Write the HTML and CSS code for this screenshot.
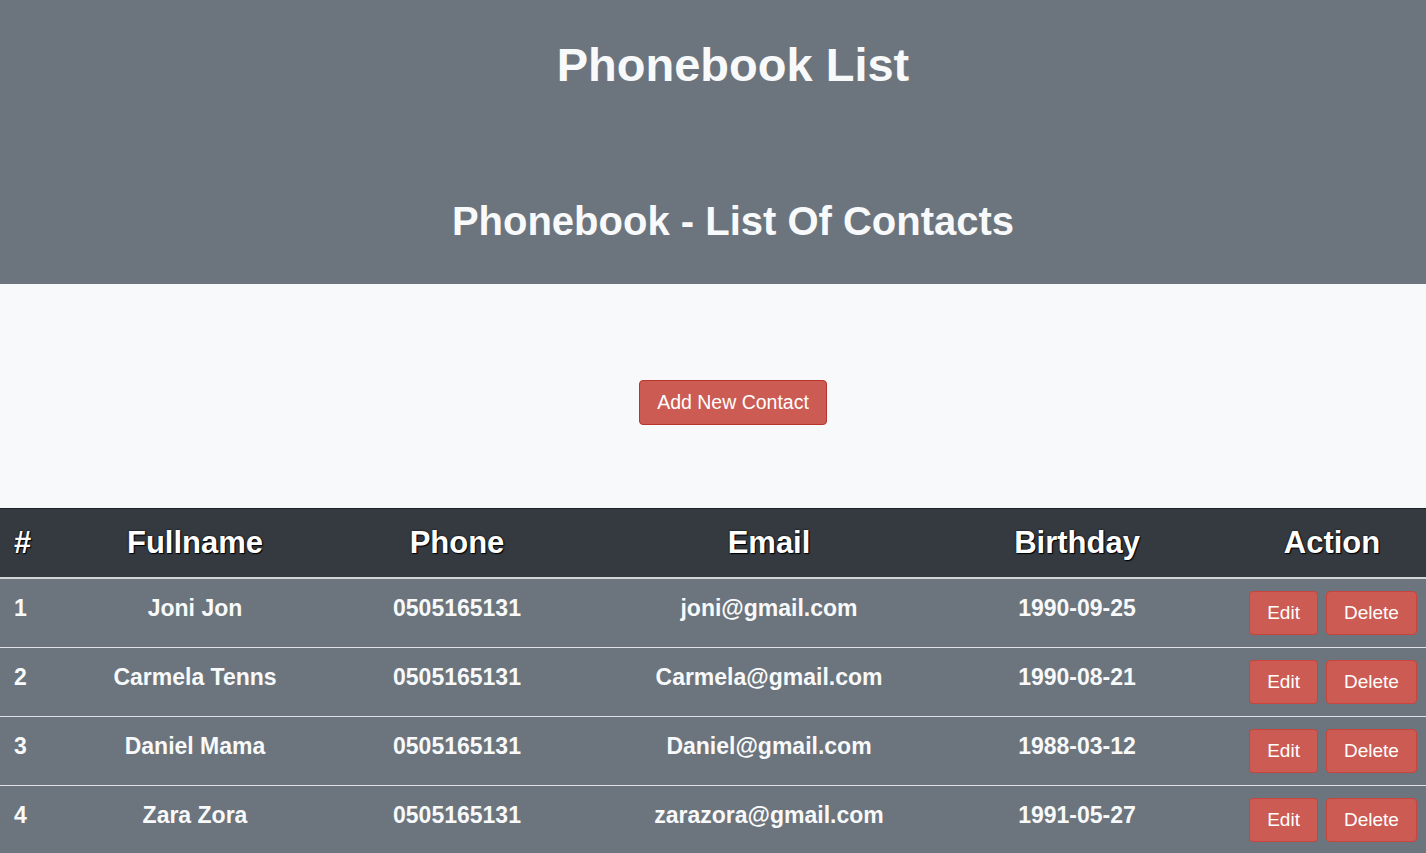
FILE: index.html
```html
<!DOCTYPE html>
<html lang="en">
<head>
<meta charset="utf-8">
<title>Phonebook List</title>
<link rel="stylesheet" href="styles.css">
</head>
<body>
<header class="hero">
  <h1 class="hero-title">Phonebook List</h1>
  <h2 class="hero-subtitle">Phonebook - List Of Contacts</h2>
</header>
<section class="actions">
  <button class="btn btn-add">Add New Contact</button>
</section>
<table class="contacts">
  <colgroup>
    <col class="c-num"><col class="c-name"><col class="c-phone"><col class="c-email"><col class="c-bday"><col class="c-action">
  </colgroup>
  <thead>
    <tr>
      <th class="left">#</th>
      <th>Fullname</th>
      <th>Phone</th>
      <th>Email</th>
      <th>Birthday</th>
      <th>Action</th>
    </tr>
  </thead>
  <tbody>
    <tr>
      <td class="left">1</td><td>Joni Jon</td><td>0505165131</td><td>joni@gmail.com</td><td>1990-09-25</td>
      <td><div class="row-btns"><button class="btn btn-sm">Edit</button><button class="btn btn-sm">Delete</button></div></td>
    </tr>
    <tr>
      <td class="left">2</td><td>Carmela Tenns</td><td>0505165131</td><td>Carmela@gmail.com</td><td>1990-08-21</td>
      <td><div class="row-btns"><button class="btn btn-sm">Edit</button><button class="btn btn-sm">Delete</button></div></td>
    </tr>
    <tr>
      <td class="left">3</td><td>Daniel Mama</td><td>0505165131</td><td>Daniel@gmail.com</td><td>1988-03-12</td>
      <td><div class="row-btns"><button class="btn btn-sm">Edit</button><button class="btn btn-sm">Delete</button></div></td>
    </tr>
    <tr>
      <td class="left">4</td><td>Zara Zora</td><td>0505165131</td><td>zarazora@gmail.com</td><td>1991-05-27</td>
      <td><div class="row-btns"><button class="btn btn-sm">Edit</button><button class="btn btn-sm">Delete</button></div></td>
    </tr>
  </tbody>
</table>
</body>
</html>
```
FILE: styles.css
```css
* { box-sizing: border-box; }
html, body {
  margin: 0;
  padding: 0;
  background: #6c757d;
  font-family: "Liberation Sans", Arial, Helvetica, sans-serif;
  color: #f8f9fa;
}
.hero {
  background: #6c757d;
  padding: 37px 0 39px 40px;
  text-align: center;
}
.hero-title {
  margin: 0;
  font-size: 47px;
  line-height: 1.2;
  font-weight: 700;
}
.hero-subtitle {
  margin: 104px 0 0;
  font-size: 40px;
  line-height: 1.2;
  font-weight: 700;
}
.actions {
  background: #f8f9fa;
  padding: 96px 0 83px 40px;
  display: flex;
  justify-content: center;
}
.btn {
  font-family: "Liberation Sans", Arial, Helvetica, sans-serif;
  background: #cc5b53;
  color: #fff;
  border: 1px solid #b8352d;
  border-radius: 4px;
  cursor: pointer;
}
.btn-add {
  font-size: 19.5px;
  line-height: 31px;
  padding: 6px 17px;
}
.contacts {
  width: 100%;
  border-collapse: collapse;
  table-layout: fixed;
}
.c-num { width: 98px; }
.c-name { width: 194px; }
.c-phone { width: 330px; }
.c-email { width: 294px; }
.c-bday { width: 322px; }
.c-action { width: 188px; }
.contacts th {
  background: #343a40;
  color: #fff;
  font-size: 31px;
  line-height: 44px;
  font-weight: 700;
  padding: 12px;
  text-align: center;
  border-top: 1px solid #1f2327;
  border-bottom: 2px solid #d3d6d9;
  text-shadow: 0 0 2px #000, 1px 1px 1px #000;
}
.contacts td {
  background: #6c757d;
  font-size: 23px;
  line-height: 34px;
  font-weight: 700;
  padding: 12px;
  text-align: center;
  vertical-align: top;
  border-top: 1px solid #dee2e6;
}
.contacts tbody tr:first-child td { border-top: none; }
.contacts .left { text-align: left; padding-left: 14px; }
.row-btns {
  display: flex;
  justify-content: center;
  gap: 8px;
  padding-left: 2px;
}
.btn-sm {
  font-size: 19px;
  line-height: 28px;
  padding: 7px 17px;
  font-weight: 400;
  border-color: #c9443c;
}
```
